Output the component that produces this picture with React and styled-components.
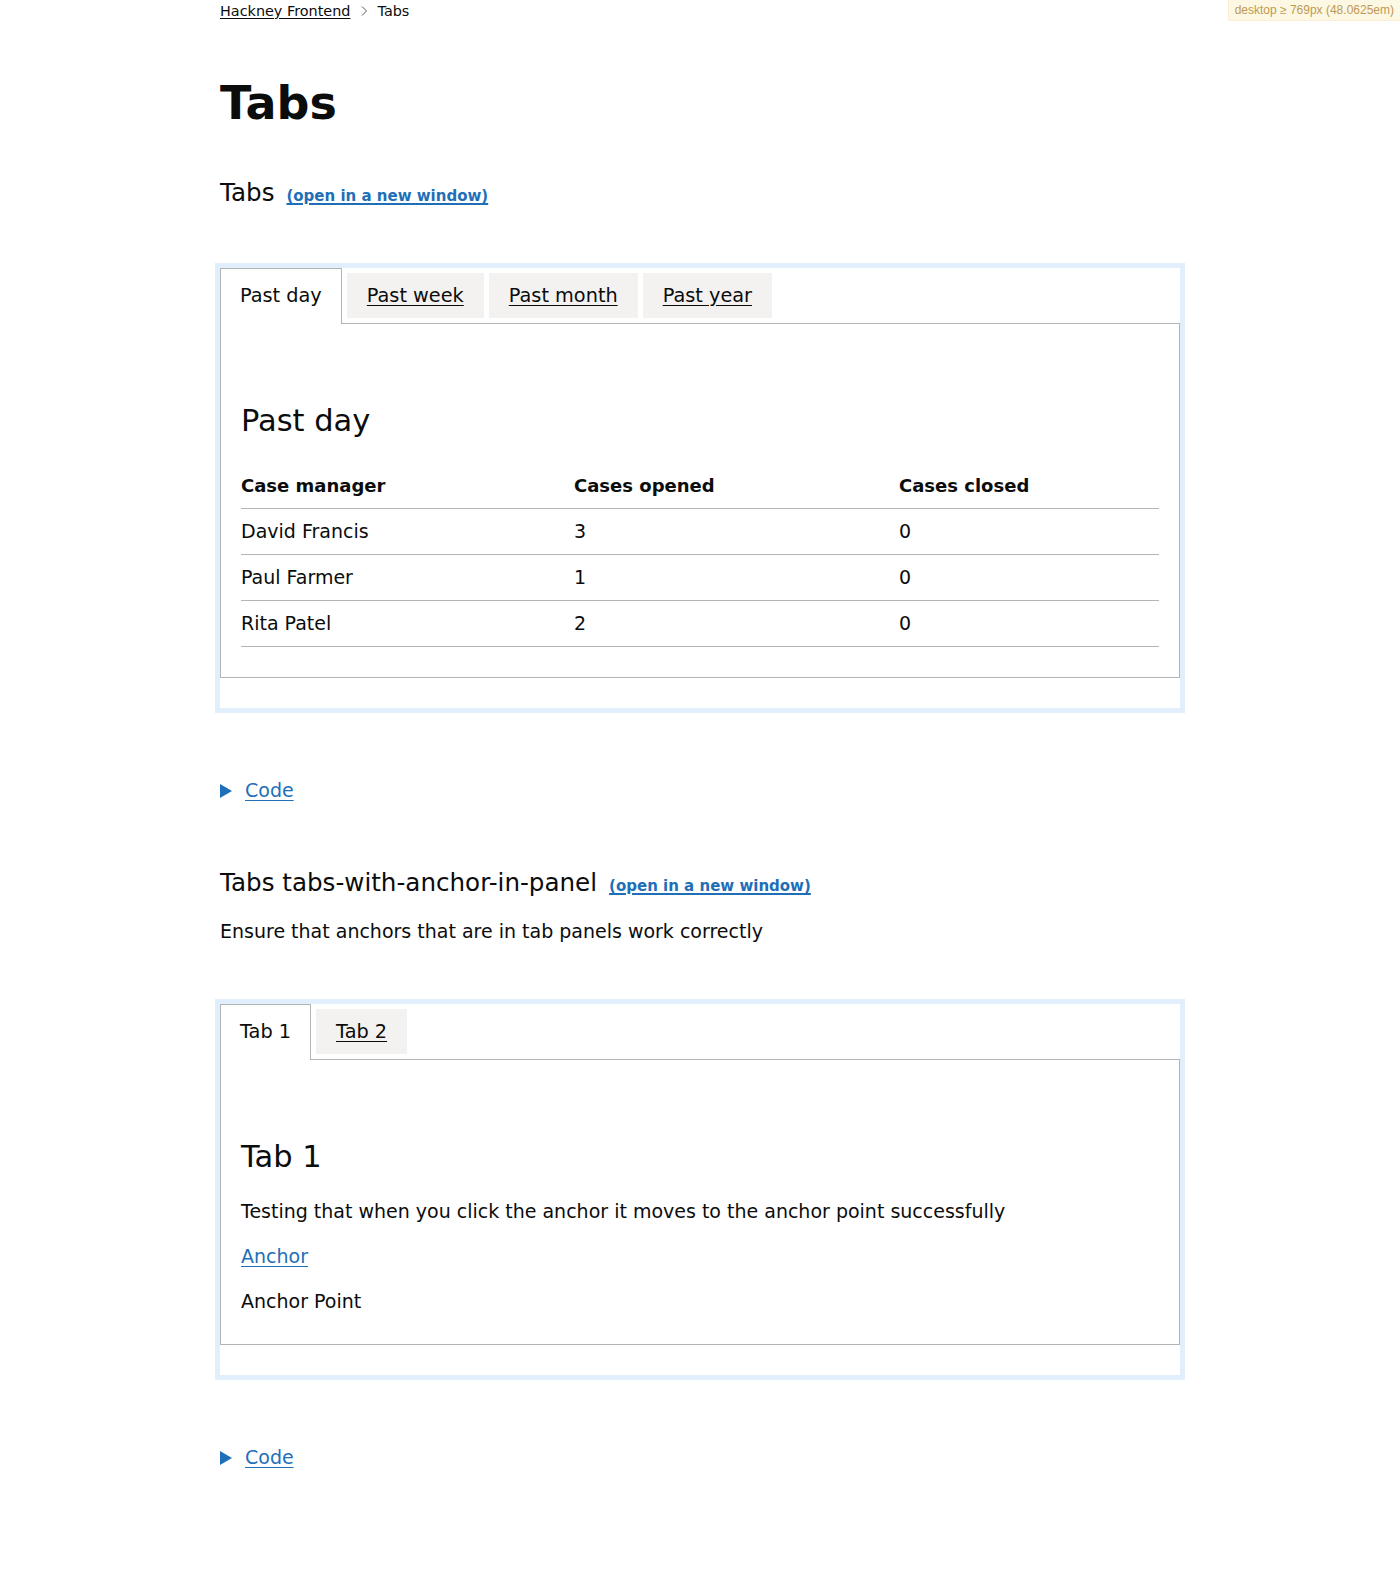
import React from 'react'
import styled, { createGlobalStyle } from 'styled-components'

const TEXT = '#0b0c0c'
const LINK = '#1e6fb8'
const BORDER = '#b1b4b6'

const GlobalStyle = createGlobalStyle`
  body {
    margin: 0;
    background: #fff;
    color: ${TEXT};
    font-family: "DejaVu Sans", "Noto Sans", sans-serif;
  }
`

const Badge = styled.div`
  position: fixed;
  top: 0;
  right: 0;
  z-index: 100;
  padding: 4px 6px 3px;
  background: #fcf8e3;
  border-left: 1px solid #fbeed5;
  border-bottom: 1px solid #fbeed5;
  color: #c09853;
  font-family: "Liberation Sans", Arial, sans-serif;
  font-size: 12px;
  line-height: 13px;
`

const Page = styled.div`
  width: 960px;
  margin: 0 auto;
  padding-bottom: 100px;
`

const Breadcrumbs = styled.nav`
  display: flex;
  align-items: center;
  font-size: 14.4px;
  line-height: 22px;
`

const CrumbLink = styled.a`
  color: ${TEXT};
  text-decoration: underline;
  text-underline-offset: 2px;
`

const Crumb = styled.span`
  color: ${TEXT};
`

const Chevron = styled.svg`
  width: 8px;
  height: 12px;
  margin: 0 9px 0 10px;
`

const Title = styled.h1`
  margin: 56px 0 0;
  font-size: 46px;
  line-height: 50px;
  font-weight: 700;
`

const ExampleHeading = styled.div`
  display: flex;
  align-items: baseline;
  gap: 12px;
  margin-top: ${p => p.$top}px;
`

const HeadingText = styled.h2`
  margin: 0;
  font-size: 24.6px;
  line-height: 30px;
  font-weight: 400;
`

const WindowLink = styled.a`
  color: ${LINK};
  font-size: 15px;
  font-weight: 700;
  text-decoration: underline;
  text-decoration-thickness: 2px;
  text-underline-offset: 2px;
`

const Description = styled.p`
  margin: 21px 0 0;
  font-size: 19px;
  line-height: 25px;
`

const Frame = styled.div`
  margin: 55px -5px 0;
  border: 5px solid #e1effd;
  background: #fff;
`

const TabList = styled.div`
  display: flex;
  align-items: flex-start;
  padding-top: 5px;
`

const Tab = styled.a`
  display: block;
  margin-right: 5px;
  color: ${TEXT};
  font-size: 19.3px;
  line-height: 25px;
  ${p => p.$selected ? `
    position: relative;
    z-index: 1;
    margin-top: -5px;
    margin-bottom: -1px;
    padding: 14px 19px 16px;
    border: 1px solid ${BORDER};
    border-bottom: 0;
    background: #fff;
    text-decoration: none;
  ` : `
    padding: 10px 20px;
    background: #f3f2f1;
    text-decoration: underline;
    text-underline-offset: 3px;
  `}
`

const Panel = styled.div`
  margin-bottom: 30px;
  padding: 30px 20px;
  border: 1px solid ${BORDER};
`

const PanelHeading = styled.h2`
  margin: 47px 0 22px;
  font-size: 30.5px;
  line-height: 40px;
  font-weight: 400;
`

const Table = styled.table`
  width: 100%;
  border-collapse: collapse;
  border-spacing: 0;
  table-layout: fixed;
`

const Th = styled.th`
  width: ${p => p.$width || 'auto'};
  padding: 10px 20px 10px 0;
  border-bottom: 1px solid ${BORDER};
  text-align: left;
  font-size: 18px;
  line-height: 25px;
  font-weight: 700;
`

const Td = styled.td`
  padding: 10px 20px 10px 0;
  border-bottom: 1px solid ${BORDER};
  font-size: 19px;
  line-height: 25px;
`

const Body = styled.p`
  margin: 0 0 20px;
  font-size: 19px;
  line-height: 25px;
  &:last-child {
    margin-bottom: 0;
  }
`

const BodyLink = styled.a`
  color: ${LINK};
  text-decoration: underline;
  text-underline-offset: 3px;
`

const Summary = styled.div`
  display: flex;
  align-items: center;
  gap: 13px;
  margin-top: 65px;
  font-size: 19px;
  line-height: 25px;
`

const SummaryLink = styled.a`
  color: ${LINK};
  text-decoration: underline;
  text-underline-offset: 3px;
`

const rows = [
  ['David Francis', '3', '0'],
  ['Paul Farmer', '1', '0'],
  ['Rita Patel', '2', '0']
]

const Tabs = ({ tabs }) =>
  <TabList>
    {tabs.map((t, i) =>
      <Tab key={t} href="#" $selected={i === 0}>{t}</Tab>
    )}
  </TabList>

const CodeDetails = () =>
  <Summary>
    <svg width="12" height="14" viewBox="0 0 12 14">
      <polygon points="0,0 12,7 0,14" fill={LINK} />
    </svg>
    <SummaryLink href="#">Code</SummaryLink>
  </Summary>

const App = () =>
  <>
    <GlobalStyle />
    <Badge>desktop ≥ 769px (48.0625em)</Badge>
    <Page>
      <Breadcrumbs>
        <CrumbLink href="#">Hackney Frontend</CrumbLink>
        <Chevron viewBox="0 0 8 12">
          <polyline points="2,1.5 6.5,6 2,10.5" fill="none" stroke="#505a5f" strokeWidth="1" />
        </Chevron>
        <Crumb>Tabs</Crumb>
      </Breadcrumbs>

      <Title>Tabs</Title>

      <ExampleHeading $top={50}>
        <HeadingText>Tabs</HeadingText>
        <WindowLink href="#">(open in a new window)</WindowLink>
      </ExampleHeading>

      <Frame>
        <Tabs tabs={['Past day', 'Past week', 'Past month', 'Past year']} />
        <Panel>
          <PanelHeading>Past day</PanelHeading>
          <Table>
            <thead>
              <tr>
                <Th $width="313px">Case manager</Th>
                <Th $width="305px">Cases opened</Th>
                <Th>Cases closed</Th>
              </tr>
            </thead>
            <tbody>
              {rows.map(r =>
                <tr key={r[0]}>
                  {r.map((c, i) => <Td key={i}>{c}</Td>)}
                </tr>
              )}
            </tbody>
          </Table>
        </Panel>
      </Frame>

      <CodeDetails />

      <ExampleHeading $top={65}>
        <HeadingText>Tabs tabs-with-anchor-in-panel</HeadingText>
        <WindowLink href="#">(open in a new window)</WindowLink>
      </ExampleHeading>
      <Description>Ensure that anchors that are in tab panels work correctly</Description>

      <Frame>
        <Tabs tabs={['Tab 1', 'Tab 2']} />
        <Panel>
          <PanelHeading>Tab 1</PanelHeading>
          <Body>Testing that when you click the anchor it moves to the anchor point successfully</Body>
          <Body><BodyLink href="#">Anchor</BodyLink></Body>
          <Body>Anchor Point</Body>
        </Panel>
      </Frame>

      <CodeDetails />
    </Page>
  </>

export default App
